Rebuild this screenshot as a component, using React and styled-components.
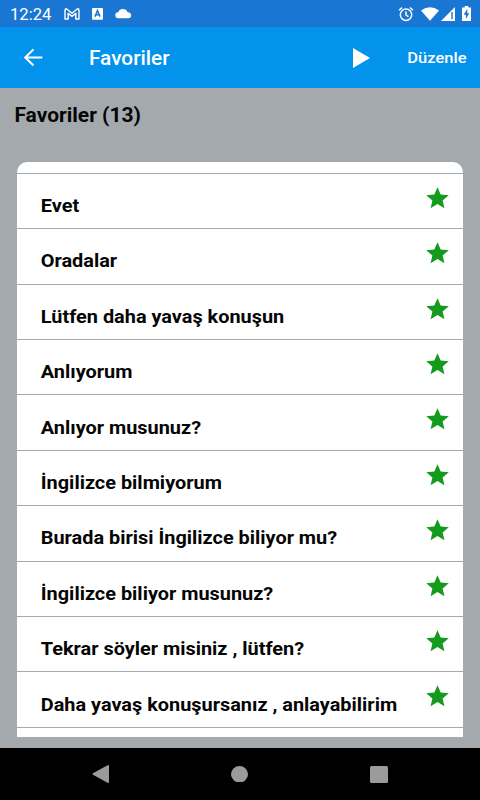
import React from "react";
import styled, { createGlobalStyle } from "styled-components";

const GlobalStyle = createGlobalStyle`
  * {
    box-sizing: border-box;
  }

  body {
    margin: 0;
    font-family: Roboto, "Noto Sans", sans-serif;
  }

  svg {
    display: block;
    flex: none;
  }
`;

const Screen = styled.div`
  width: 480px;
  height: 800px;
  display: flex;
  flex-direction: column;
  overflow: hidden;
  background: #a4a9ad;
`;

const StatusBar = styled.div`
  height: 27px;
  flex: none;
  display: flex;
  align-items: center;
  padding: 0 9px 0 10px;
  background: #1976d2;
  color: white;
`;

const Clock = styled.span`
  width: 54px;
  font-size: 16.6px;
  line-height: 27px;
  padding-top: 2px;
  transform: scaleY(0.94);
`;

const StatusIcons = styled.div`
  display: flex;
  align-items: center;
  gap: ${({ $gap }) => $gap}px;
  margin-left: ${({ $right }) => ($right ? "auto" : 0)};
`;

const WifiIcon = styled.svg`
  margin-left: 7.5px;
`;

const SignalIcon = styled.svg`
  margin-left: 1.5px;
`;

const BatteryIcon = styled.svg`
  margin-left: 7.5px;
`;

const AppBar = styled.header`
  height: 61px;
  flex: none;
  display: flex;
  align-items: center;
  padding: 0 13.5px 0 20px;
  background: #0392ec;
  color: white;
`;

const Title = styled.h1`
  margin: 0 auto 0 43px;
  font-size: 20.8px;
  font-weight: 500;
  line-height: 24px;
  padding-top: 1px;
  transform: scaleY(0.94);
`;

const EditButton = styled.button`
  margin-left: 37px;
  padding: 0;
  border: 0;
  background: none;
  color: white;
  font: 500 16.5px/20px Roboto, sans-serif;
  transform: scaleY(0.94);
`;

const Content = styled.main`
  flex: 1;
  min-height: 0;
  padding: 15px 17px 11px 17.4px;
  display: flex;
  flex-direction: column;
`;

const Heading = styled.h2`
  margin: 0 0 35.4px -3px;
  font-size: 21px;
  line-height: 24px;
  font-weight: 700;
  color: #050505;
  transform: scaleY(0.94);
`;

const Card = styled.ul`
  flex: 1;
  min-height: 0;
  margin: 0;
  padding: 10.3px 0 0;
  list-style: none;
  overflow: hidden;
  background: white;
  border-radius: 10px 10px 0 0;
`;

const Row = styled.li`
  height: 55.43px;
  display: flex;
  align-items: flex-start;
  justify-content: space-between;
  padding: 0 12px 0 23.4px;
  border-top: 1px solid #a4a9ad;
`;

const Phrase = styled.span`
  margin-top: 20.2px;
  font-size: 19.9px;
  line-height: 24px;
  font-weight: 700;
  color: #050505;
  white-space: nowrap;
  transform: scaleY(0.94);
`;

const StarIcon = styled.svg`
  width: 27px;
  height: 26.5px;
  margin-top: 11px;
  fill: #149a1c;
`;

const NavBar = styled.nav`
  height: 52px;
  flex: none;
  display: flex;
  align-items: center;
  justify-content: space-between;
  padding: 0 92.5px 0 92px;
  background: black;
`;

const phrases = [
  "Evet",
  "Oradalar",
  "Lütfen daha yavaş konuşun",
  "Anlıyorum",
  "Anlıyor musunuz?",
  "İngilizce bilmiyorum",
  "Burada birisi İngilizce biliyor mu?",
  "İngilizce biliyor musunuz?",
  "Tekrar söyler misiniz , lütfen?",
  "Daha yavaş konuşursanız , anlayabilirim",
];

const Star = () => (
  <StarIcon viewBox="0 0 24 24" preserveAspectRatio="none">
    <path d="M12 17.27L18.18 21l-1.64-7.03L22 9.24l-7.19-.61L12 2 9.19 8.63 2 9.24l5.46 4.73L5.82 21z" />
  </StarIcon>
);

const LeftStatus = () => (
  <StatusIcons $gap={12}>
    <svg width="16" height="12" viewBox="0 0 16 12" fill="none" stroke="white" strokeWidth="1.4" strokeLinejoin="round">
      <path d="M1 2.2Q1 .8 2.4 .8L8 5.2 13.6 .8Q15 .8 15 2.2V11H11.8V5.4L8 8.4 4.2 5.4V11H1z" />
    </svg>
    <svg width="11" height="12" viewBox="0 0 11 12">
      <rect width="11" height="11.7" rx="1" fill="white" />
      <path d="M3 8.6L5.5 2.5 8 8.6M3.9 6.7h3.2" fill="none" stroke="#1976d2" strokeWidth="1.5" />
    </svg>
    <svg width="17" height="10" viewBox="0 0 17 10" fill="white">
      <path d="M3.4 9.2A3 3 0 0 1 3.2 3.2 5.1 5.1 0 0 1 12.6 3.2 3 3 0 0 1 13.6 9.2z" />
    </svg>
  </StatusIcons>
);

const RightStatus = () => (
  <StatusIcons $gap={0} $right>
    <svg width="16" height="16" viewBox="0 0 16 16" fill="none" stroke="white" strokeWidth="1.5">
      <circle cx="8" cy="8.8" r="5.7" />
      <path d="M8 5.4V9l2.5 1.7M1 4.2l3-2.6M15 4.2l-3-2.6" />
    </svg>
    <WifiIcon width="18" height="14" viewBox="0 0 18 14" fill="white">
      <path d="M0 3.5Q9-3.1 18 3.5L9 13.8z" />
    </WifiIcon>
    <SignalIcon width="14" height="14" viewBox="0 0 14 14">
      <path d="M0 14L14 0v14z" fill="white" />
      <path d="M11 5V12.2" stroke="#1976d2" strokeWidth="1.4" />
    </SignalIcon>
    <BatteryIcon width="9" height="15" viewBox="0 0 9 15">
      <path d="M2.7 0h3.6v1.4H9V15H0V1.4h2.7z" fill="white" />
      <path d="M5.3 2.8L1.7 8.8h2.2v4.3L7.3 7.2H5.3z" fill="#1976d2" />
    </BatteryIcon>
  </StatusIcons>
);

const App = () => {
  return (
    <>
      <GlobalStyle />
      <Screen>
        <StatusBar>
          <Clock>12:24</Clock>
          <LeftStatus />
          <RightStatus />
        </StatusBar>
        <AppBar>
          <svg width="26" height="26" viewBox="0 0 26 26" fill="none" stroke="white" strokeWidth="2">
            <path d="M22.3 12.5H5.2M13.5 4.4L5.2 12.5l8.3 8" />
          </svg>
          <Title>Favoriler</Title>
          <svg width="17" height="20" viewBox="0 0 17 20" fill="white">
            <path d="M0 0l17 10L0 20z" />
          </svg>
          <EditButton>Düzenle</EditButton>
        </AppBar>
        <Content>
          <Heading>Favoriler (13)</Heading>
          <Card>
            {phrases.map((phrase) => (
              <Row key={phrase}>
                <Phrase>{phrase}</Phrase>
                <Star />
              </Row>
            ))}
            <Row />
          </Card>
        </Content>
        <NavBar>
          <svg width="17" height="18" viewBox="0 0 18 18" preserveAspectRatio="none" fill="#9b9b9b">
            <path d="M17 0q1 0 1 1v16q0 1-1 1L1 9.8Q0 9 1 8.2z" />
          </svg>
          <svg width="17" height="16.5" viewBox="0 0 17 17" preserveAspectRatio="none" fill="#9b9b9b">
            <circle cx="8.5" cy="8.5" r="8.5" />
          </svg>
          <svg width="18" height="17" viewBox="0 0 18 17" fill="#9b9b9b">
            <rect width="18" height="17" rx="1.5" />
          </svg>
        </NavBar>
      </Screen>
    </>
  );
};

export default App;
